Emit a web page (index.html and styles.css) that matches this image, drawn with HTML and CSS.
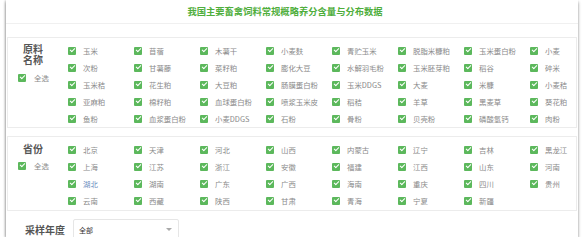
FILE: index.html
```html
<!DOCTYPE html>
<html lang="zh-CN">
<head>
<meta charset="utf-8">
<title>我国主要畜禽饲料常规概略养分含量与分布数据</title>
<link rel="stylesheet" href="styles.css">
</head>
<body>
<div class="card">
  <div class="title-bar"><h1 class="title">我国主要畜禽饲料常规概略养分含量与分布数据</h1></div>

  <section class="group group-feed">
    <div class="group-label">
      <div class="label-text">原料<br>名称</div>
      <label class="check check-all"><span class="box"></span><span class="txt">全选</span></label>
    </div>
    <div class="grid">
      <label class="check"><span class="box"></span><span class="txt">玉米</span></label>
      <label class="check"><span class="box"></span><span class="txt">苜蓿</span></label>
      <label class="check"><span class="box"></span><span class="txt">木薯干</span></label>
      <label class="check"><span class="box"></span><span class="txt">小麦麸</span></label>
      <label class="check"><span class="box"></span><span class="txt">青贮玉米</span></label>
      <label class="check"><span class="box"></span><span class="txt">脱脂米糠粕</span></label>
      <label class="check"><span class="box"></span><span class="txt">玉米蛋白粉</span></label>
      <label class="check"><span class="box"></span><span class="txt">小麦</span></label>

      <label class="check"><span class="box"></span><span class="txt">次粉</span></label>
      <label class="check"><span class="box"></span><span class="txt">甘薯藤</span></label>
      <label class="check"><span class="box"></span><span class="txt">菜籽粕</span></label>
      <label class="check"><span class="box"></span><span class="txt">膨化大豆</span></label>
      <label class="check"><span class="box"></span><span class="txt">水解羽毛粉</span></label>
      <label class="check"><span class="box"></span><span class="txt">玉米胚芽粕</span></label>
      <label class="check"><span class="box"></span><span class="txt">稻谷</span></label>
      <label class="check"><span class="box"></span><span class="txt">碎米</span></label>

      <label class="check"><span class="box"></span><span class="txt">玉米秸</span></label>
      <label class="check"><span class="box"></span><span class="txt">花生粕</span></label>
      <label class="check"><span class="box"></span><span class="txt">大豆粕</span></label>
      <label class="check"><span class="box"></span><span class="txt">肠膜蛋白粉</span></label>
      <label class="check"><span class="box"></span><span class="txt">玉米DDGS</span></label>
      <label class="check"><span class="box"></span><span class="txt">大麦</span></label>
      <label class="check"><span class="box"></span><span class="txt">米糠</span></label>
      <label class="check"><span class="box"></span><span class="txt">小麦秸</span></label>

      <label class="check"><span class="box"></span><span class="txt">亚麻粕</span></label>
      <label class="check"><span class="box"></span><span class="txt">棉籽粕</span></label>
      <label class="check"><span class="box"></span><span class="txt">血球蛋白粉</span></label>
      <label class="check"><span class="box"></span><span class="txt">喷浆玉米皮</span></label>
      <label class="check"><span class="box"></span><span class="txt">稻秸</span></label>
      <label class="check"><span class="box"></span><span class="txt">羊草</span></label>
      <label class="check"><span class="box"></span><span class="txt">黑麦草</span></label>
      <label class="check"><span class="box"></span><span class="txt">葵花粕</span></label>

      <label class="check"><span class="box"></span><span class="txt">鱼粉</span></label>
      <label class="check"><span class="box"></span><span class="txt">血浆蛋白粉</span></label>
      <label class="check"><span class="box"></span><span class="txt">小麦DDGS</span></label>
      <label class="check"><span class="box"></span><span class="txt">石粉</span></label>
      <label class="check"><span class="box"></span><span class="txt">骨粉</span></label>
      <label class="check"><span class="box"></span><span class="txt">贝壳粉</span></label>
      <label class="check"><span class="box"></span><span class="txt">磷酸氢钙</span></label>
      <label class="check"><span class="box"></span><span class="txt">肉粉</span></label>
    </div>
  </section>

  <section class="group group-prov">
    <div class="group-label">
      <div class="label-text">省份</div>
      <label class="check check-all"><span class="box"></span><span class="txt">全选</span></label>
    </div>
    <div class="grid">
      <label class="check"><span class="box"></span><span class="txt">北京</span></label>
      <label class="check"><span class="box"></span><span class="txt">天津</span></label>
      <label class="check"><span class="box"></span><span class="txt">河北</span></label>
      <label class="check"><span class="box"></span><span class="txt">山西</span></label>
      <label class="check"><span class="box"></span><span class="txt">内蒙古</span></label>
      <label class="check"><span class="box"></span><span class="txt">辽宁</span></label>
      <label class="check"><span class="box"></span><span class="txt">吉林</span></label>
      <label class="check"><span class="box"></span><span class="txt">黑龙江</span></label>

      <label class="check"><span class="box"></span><span class="txt">上海</span></label>
      <label class="check"><span class="box"></span><span class="txt">江苏</span></label>
      <label class="check"><span class="box"></span><span class="txt">浙江</span></label>
      <label class="check"><span class="box"></span><span class="txt">安徽</span></label>
      <label class="check"><span class="box"></span><span class="txt">福建</span></label>
      <label class="check"><span class="box"></span><span class="txt">江西</span></label>
      <label class="check"><span class="box"></span><span class="txt">山东</span></label>
      <label class="check"><span class="box"></span><span class="txt">河南</span></label>

      <label class="check"><span class="box"></span><span class="txt txt-hover">湖北</span></label>
      <label class="check"><span class="box"></span><span class="txt">湖南</span></label>
      <label class="check"><span class="box"></span><span class="txt">广东</span></label>
      <label class="check"><span class="box"></span><span class="txt">广西</span></label>
      <label class="check"><span class="box"></span><span class="txt">海南</span></label>
      <label class="check"><span class="box"></span><span class="txt">重庆</span></label>
      <label class="check"><span class="box"></span><span class="txt">四川</span></label>
      <label class="check"><span class="box"></span><span class="txt">贵州</span></label>

      <label class="check"><span class="box"></span><span class="txt">云南</span></label>
      <label class="check"><span class="box"></span><span class="txt">西藏</span></label>
      <label class="check"><span class="box"></span><span class="txt">陕西</span></label>
      <label class="check"><span class="box"></span><span class="txt">甘肃</span></label>
      <label class="check"><span class="box"></span><span class="txt">青海</span></label>
      <label class="check"><span class="box"></span><span class="txt">宁夏</span></label>
      <label class="check"><span class="box"></span><span class="txt">新疆</span></label>
    </div>
  </section>

  <div class="year-row">
    <span class="year-label">采样年度</span>
    <div class="select"><span class="select-text">全部</span><span class="arrow"></span></div>
  </div>
</div>
</body>
</html>
```

FILE: styles.css
```css
* { box-sizing: border-box; }

html, body {
  margin: 0;
  padding: 0;
  background: #ffffff;
}

body {
  font-family: "Noto Sans CJK SC", "Noto Sans", sans-serif;
  color: #888;
}

.card {
  margin-left: 6px;
  width: 572px;
  height: 237px;
  background: #fff;
  overflow: hidden;
  box-shadow: 0 2px 3px rgba(0, 0, 0, 0.45), -1px 0 2px rgba(0, 0, 0, 0.15);
}

.title-bar {
  height: 24px;
  border-bottom: 1px solid #f0f0f0;
  margin-bottom: 13px;
}

.title {
  margin: 0;
  padding-right: 14px;
  text-align: center;
  font-size: 9.3px;
  line-height: 23px;
  font-weight: bold;
  color: #4fae3d;
}

.group {
  display: flex;
  margin: 0 1px;
  border: 1px solid #ececec;
}

.group-feed {
  height: 91px;
  padding-top: 4px;
}

.group-prov {
  margin-top: 8px;
  height: 75px;
  padding-top: 4px;
}

.group-label {
  width: 60px;
  flex: none;
  display: flex;
  flex-direction: column;
}

.label-text {
  padding-left: 15px;
  font-size: 10px;
  line-height: 11px;
  font-weight: bold;
  color: #555;
}

.group-feed .label-text { padding-top: 1px; }
.group-prov .label-text { padding-top: 2px; }

.check {
  display: flex;
  align-items: center;
  gap: 7px;
  height: 17px;
  white-space: nowrap;
}

.check-all {
  margin-left: 10px;
  gap: 8px;
}

.group-feed .check-all { margin-top: 4px; }
.group-prov .check-all { margin-top: 3px; }

.box {
  position: relative;
  width: 8px;
  height: 8px;
  flex: none;
  background: #5cb85c;
  border-radius: 1px;
}

.box::after {
  content: "";
  position: absolute;
  left: 2.6px;
  top: 0.8px;
  width: 2px;
  height: 4px;
  border-right: 1px solid #fff;
  border-bottom: 1px solid #fff;
  transform: rotate(45deg);
}

.txt {
  font-size: 7.4px;
  line-height: 9px;
  color: #8a8a8a;
}

.txt-hover { color: #6f8fbf; }

.grid {
  display: grid;
  grid-template-columns: repeat(8, 66px);
  grid-auto-rows: 17px;
  padding-top: 0;
}

.year-row {
  display: flex;
  align-items: flex-start;
  padding-left: 19px;
  padding-top: 8px;
}

.year-label {
  margin-top: 5px;
  font-size: 10px;
  line-height: 11px;
  font-weight: bold;
  color: #555;
  width: 48px;
  flex: none;
}

.select {
  position: relative;
  width: 106px;
  height: 22px;
  border: 1px solid #e6e6e6;
  border-radius: 2px;
  padding-left: 5px;
  display: flex;
  align-items: center;
}

.select-text {
  font-size: 7px;
  color: #333;
  margin-top: 0;
}

.arrow {
  position: absolute;
  right: 6px;
  top: 8px;
  width: 0;
  height: 0;
  border-left: 3px solid transparent;
  border-right: 3px solid transparent;
  border-top: 3px solid #aaa;
}
```
